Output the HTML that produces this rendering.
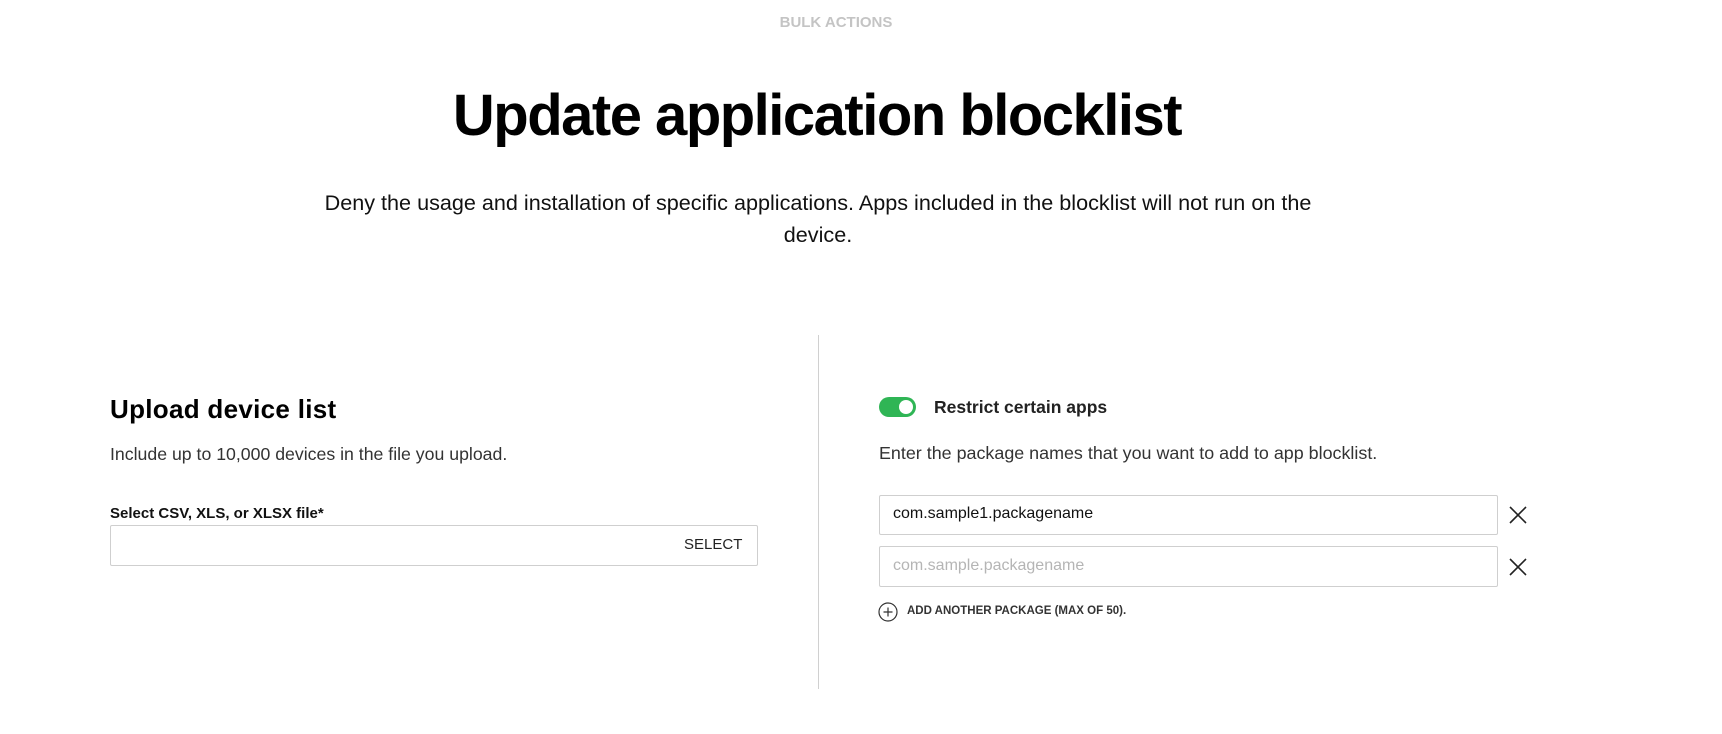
<!DOCTYPE html>
<html><head><meta charset="utf-8"><style>
*{margin:0;padding:0;box-sizing:border-box}
body{width:1722px;height:734px;background:#fff;position:relative;font-family:"Liberation Sans","DejaVu Sans",sans-serif;color:#111;overflow:hidden}
.a{position:absolute;white-space:nowrap}
.inp{position:absolute;border:1px solid #cfcfcf;border-radius:2px;background:#fff}
</style></head><body>
<div class="a" style="left:0;width:1672px;text-align:center;top:14px;font-size:15px;font-weight:bold;color:#c4c4c4">BULK ACTIONS</div>
<div class="a" style="left:0;width:1634px;text-align:center;top:82px;font-size:58px;font-weight:bold;letter-spacing:-1.5px;color:#000">Update application blocklist</div>
<div class="a" style="left:0;width:1636px;text-align:center;top:187px;font-size:21.6px;line-height:32px;color:#111;white-space:normal">Deny the usage and installation of specific applications. Apps included in the blocklist will not run on the<br>device.</div>
<div class="a" style="left:818px;top:335px;width:1px;height:354px;background:#d0d0d0"></div>

<div class="a" style="left:110px;top:394px;font-size:26px;font-weight:bold;color:#000;letter-spacing:0.3px">Upload device list</div>
<div class="a" style="left:110px;top:444px;font-size:17.7px;color:#333">Include up to 10,000 devices in the file you upload.</div>
<div class="a" style="left:110px;top:505px;font-size:15px;font-weight:bold;color:#111">Select CSV, XLS, or XLSX file*</div>
<div class="inp" style="left:110px;top:525px;width:648px;height:41px"></div>
<div class="a" style="left:684px;top:536px;width:56px;text-align:right;font-size:15px;color:#222">SELECT</div>

<div class="a" style="left:879px;top:397px;width:37px;height:20px;border-radius:10px;background:#2fb555"></div>
<div class="a" style="left:899px;top:400px;width:14px;height:14px;border-radius:7px;background:#fff"></div>
<div class="a" style="left:934px;top:397px;font-size:17.5px;font-weight:bold;color:#222">Restrict certain apps</div>
<div class="a" style="left:879px;top:443px;font-size:17.9px;color:#333">Enter the package names that you want to add to app blocklist.</div>
<div class="inp" style="left:879px;top:495px;width:619px;height:40px"></div>
<div class="a" style="left:893px;top:505px;font-size:16px;color:#111">com.sample1.packagename</div>
<div class="inp" style="left:879px;top:546px;width:619px;height:41px"></div>
<div class="a" style="left:893px;top:557px;font-size:16px;color:#b5b5b5">com.sample.packagename</div>
<svg class="a" style="left:1509px;top:506px" width="18" height="18"><path d="M1 1L17 17M17 1L1 17" stroke="#222" stroke-width="1.6"/></svg>
<svg class="a" style="left:1509px;top:558px" width="18" height="18"><path d="M1 1L17 17M17 1L1 17" stroke="#222" stroke-width="1.6"/></svg>
<svg class="a" style="left:878px;top:602px" width="20" height="20"><circle cx="10" cy="10" r="9" fill="none" stroke="#333" stroke-width="1.2"/><path d="M10 5.5V14.5M5.5 10H14.5" stroke="#333" stroke-width="1.2"/></svg>
<div class="a" style="left:907px;top:605px;font-size:11.5px;font-weight:bold;color:#333">ADD ANOTHER PACKAGE (MAX OF 50).</div>
</body></html>
